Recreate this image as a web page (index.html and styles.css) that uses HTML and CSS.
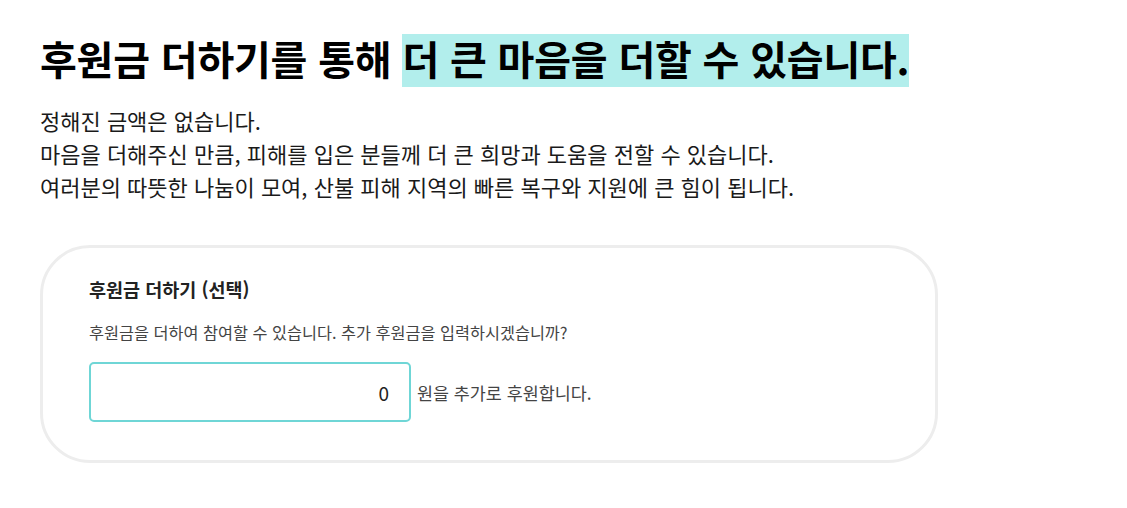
FILE: index.html
```html
<!DOCTYPE html>
<html lang="ko">
  <head>
    <meta charset="UTF-8" />
    <meta name="viewport" content="width=device-width, initial-scale=1.0" />
    <title>후원금 더하기</title>
    <link rel="stylesheet" href="styles.css">
  </head>

  <body>
    <section class="donate">
      <h1 class="donate-title">
        후원금 더하기를 통해 <span class="mark">더 큰 마음을 더할 수 있습니다.</span>
      </h1>
      <p class="donate-lead">
        정해진 금액은 없습니다.<br />
        마음을 더해주신 만큼, 피해를 입은 분들께 더 큰 희망과 도움을 전할 수 있습니다.<br />
        여러분의 따뜻한 나눔이 모여, 산불 피해 지역의 빠른 복구와 지원에 큰 힘이 됩니다.
      </p>

      <!-- 추가 후원금 입력 -->
      <div class="extra-card">
        <h2 class="extra-title">후원금 더하기 (선택)</h2>
        <p class="extra-desc">후원금을 더하여 참여할 수 있습니다. 추가 후원금을 입력하시겠습니까?</p>
        <div class="extra-row">
          <input type="text" class="extra-input" id="extraAmount" value="0" />
          <label for="extraAmount" class="extra-unit">원을 추가로 후원합니다.</label>
        </div>
      </div>
    </section>
  </body>
</html>
```

FILE: styles.css
```css
body {
  font-family: "Noto Sans CJK KR", "Noto Sans", sans-serif;
  background-color: #fff;
  color: #111;
  margin: 0;
}

.donate {
  padding: 34px 40px 0;
}

.donate-title {
  margin: 0;
  font-size: 40px;
  font-weight: 700;
  letter-spacing: -0.2px;
  line-height: 49px;
  padding-bottom: 4px;
  color: #000;
}

.donate-title .mark {
  display: inline-block;
  line-height: 49px;
  padding-bottom: 4px;
  vertical-align: top;
  background-color: #b2eeec;
}

.donate-lead {
  margin: 13px 0 0;
  font-size: 22px;
  line-height: 33px;
  color: #1a1a1a;
}

.extra-card {
  width: 800px;
  margin-top: 42px;
  padding: 29px 46px 38px;
  border: 3px solid #ededed;
  border-radius: 50px;
}

.extra-title {
  margin: 0;
  font-size: 18.5px;
  line-height: 24px;
  font-weight: 700;
  color: #222;
}

.extra-desc {
  margin: 20px 0 0;
  font-size: 16.3px;
  line-height: 22px;
  color: #444;
}

.extra-row {
  display: flex;
  align-items: center;
  gap: 6px;
  margin-top: 19px;
}

.extra-input {
  box-sizing: border-box;
  width: 322px;
  height: 60px;
  padding: 0 20px;
  border: 2px solid #6fd6d6;
  border-radius: 5px;
  font-family: inherit;
  font-size: 19px;
  text-align: right;
  color: #222;
  outline: none;
}

.extra-unit {
  font-size: 17.4px;
  color: #444;
}
```
